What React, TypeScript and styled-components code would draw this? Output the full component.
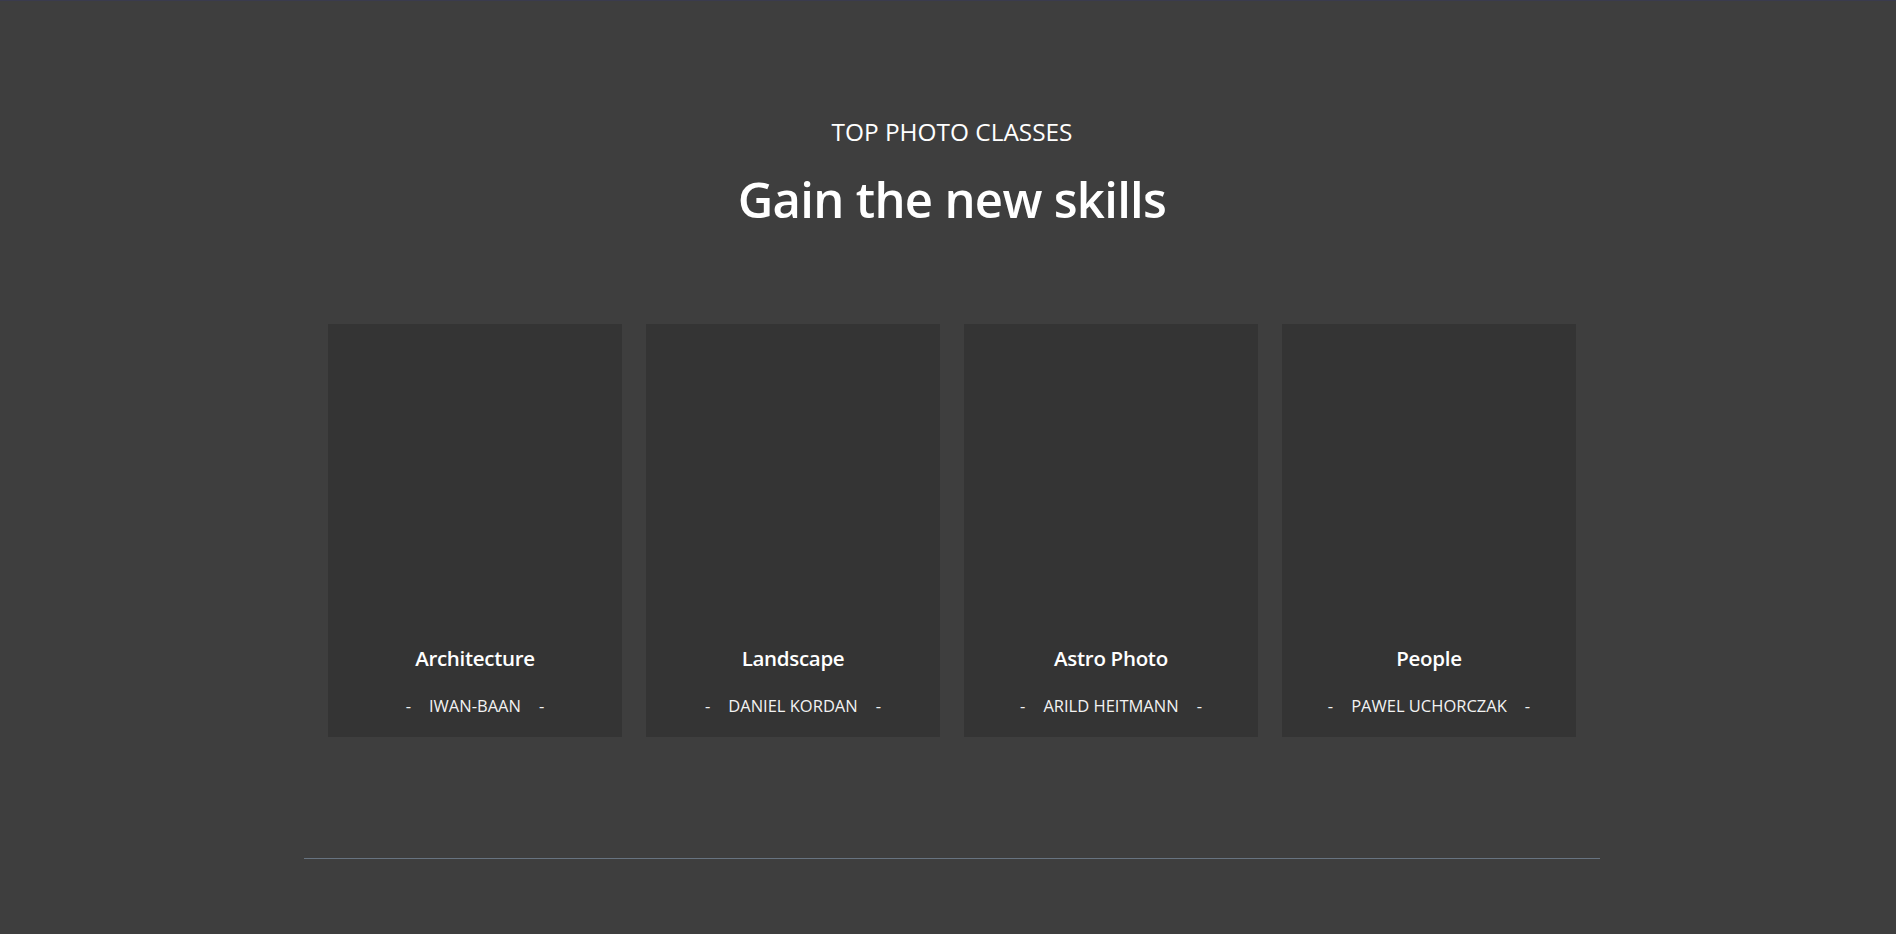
import React from "react";
import styled, { createGlobalStyle } from "styled-components";

const GlobalStyle = createGlobalStyle`
  html, body {
    margin: 0;
    padding: 0;
    background: #3e3e3e;
  }
  body {
    font-family: "Open Sans", "Noto Sans", sans-serif;
    color: #ffffff;
  }
`;

const Page = styled.div`
  min-height: 100vh;
  box-sizing: border-box;
  background: #3e3e3e;
  border-top: 1px solid #3a3b4e;
  padding-left: 8px;
  display: flex;
  flex-direction: column;
  align-items: center;
`;

const Section = styled.section`
  width: 1296px;
  display: flex;
  flex-direction: column;
  align-items: center;
  padding-top: 116px;
`;

const Eyebrow = styled.p`
  margin: 0;
  font-size: 24.4px;
  line-height: 30px;
  font-weight: 400;
  letter-spacing: 0;
  text-transform: uppercase;
`;

const Heading = styled.h2`
  margin: 22px 0 0;
  font-size: 49px;
  line-height: 60px;
  font-weight: 600;
  letter-spacing: -0.7px;
`;

const Grid = styled.div`
  display: grid;
  grid-template-columns: repeat(4, 294px);
  gap: 24px;
  margin-top: 95px;
`;

const Card = styled.article`
  height: 413px;
  background: #343434;
  display: flex;
  flex-direction: column;
  justify-content: flex-end;
  align-items: center;
  padding-bottom: 20px;
  box-sizing: border-box;
`;

const CardTitle = styled.h3`
  margin: 0;
  font-size: 20.5px;
  line-height: 28px;
  font-weight: 600;
  letter-spacing: -0.3px;
`;

const Author = styled.div`
  margin-top: 23px;
  display: flex;
  align-items: center;
  gap: 18px;
  font-size: 16.5px;
  line-height: 22px;
  font-weight: 400;
  color: #f2f2f2;
  text-transform: uppercase;
`;

const Divider = styled.hr`
  width: 1296px;
  height: 1px;
  border: 0;
  margin: 121px 0 0;
  background: #677380;
`;

const classes = [
  { title: "Architecture", author: "IWAN-BAAN" },
  { title: "Landscape", author: "DANIEL KORDAN" },
  { title: "Astro Photo", author: "ARILD HEITMANN" },
  { title: "People", author: "PAWEL UCHORCZAK" },
];

export default function App() {
  return (
    <>
      <GlobalStyle />
      <Page>
        <Section>
          <Eyebrow>Top photo classes</Eyebrow>
          <Heading>Gain the new skills</Heading>
          <Grid>
            {classes.map((c) => (
              <Card key={c.title}>
                <CardTitle>{c.title}</CardTitle>
                <Author>
                  <span>-</span>
                  <span>{c.author}</span>
                  <span>-</span>
                </Author>
              </Card>
            ))}
          </Grid>
          <Divider />
        </Section>
      </Page>
    </>
  );
}
